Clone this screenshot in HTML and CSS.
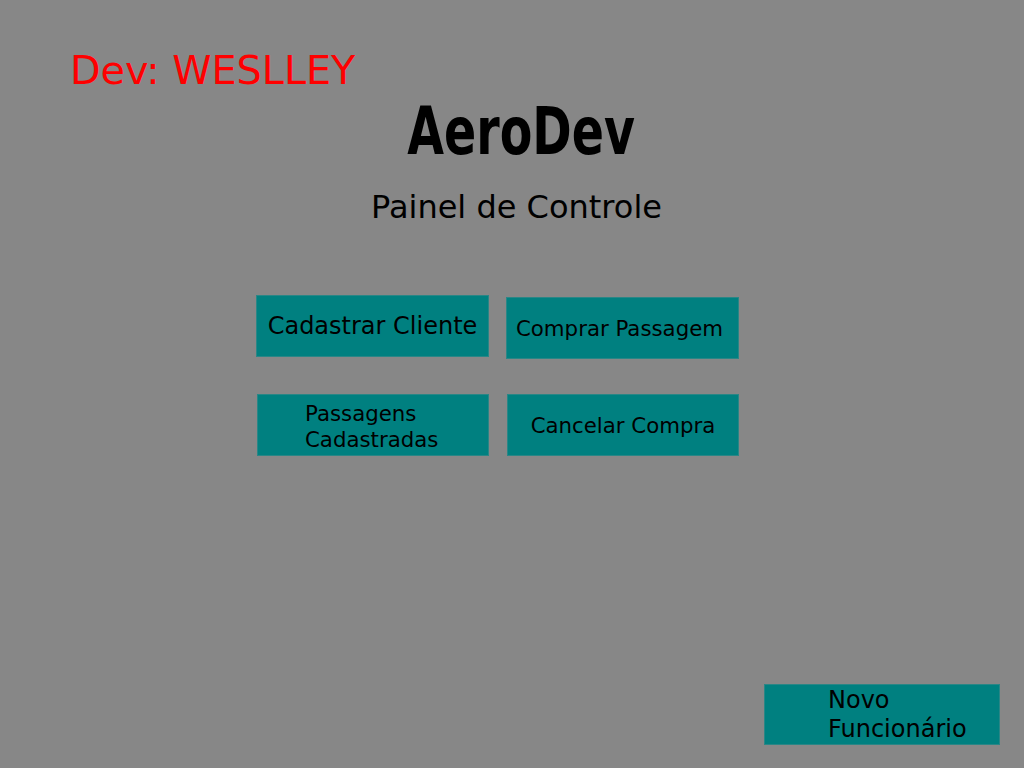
FILE: index.html
```html
<!DOCTYPE html>
<html lang="pt">
<head>
  <meta charset="UTF-8">
  <title>AeroDev</title>
  <link rel="stylesheet" href="styles.css">
</head>
<body>
  <div class="frame">
    <p class="dev">Dev: WESLLEY</p>
    <h1 class="brand"><span>AeroDev</span></h1>
    <p class="subtitle">Painel de Controle</p>

    <div class="menu">
      <button class="btn btn-big">Cadastrar Cliente</button>
      <button class="btn btn-shift">Comprar Passagem</button>
      <button class="btn btn-lines">Passagens<br>Cadastradas</button>
      <button class="btn btn-right">Cancelar Compra</button>
    </div>

    <div class="footer">
      <button class="btn btn-novo">Novo<br>Funcionário</button>
    </div>
  </div>
</body>
</html>
```

FILE: styles.css
```css
body {
  margin: 0;
  background: #878787;
  font-family: "DejaVu Sans", sans-serif;
}
.frame {
  height: 768px;
  display: flex;
  flex-direction: column;
  padding-top: 48px;
  box-sizing: border-box;
}
.dev {
  margin: 0 0 0 70px;
  font-size: 39.7px;
  line-height: 45px;
  color: #ff0000;
}
.brand {
  margin: 6px 0 0;
  padding-left: 19px;
  text-align: center;
  font-size: 66px;
  line-height: 66px;
  font-weight: bold;
  color: #000;
}
.brand span {
  display: inline-block;
  transform: scaleX(0.72);
}
.subtitle {
  margin: 24px 0 0;
  padding-left: 9px;
  text-align: center;
  font-size: 32px;
  line-height: 36px;
  color: #000;
}
.menu {
  margin: 70px 0 0 256px;
  display: grid;
  grid-template-columns: 233px 233px;
  column-gap: 17px;
  row-gap: 35px;
}
.btn {
  height: 62px;
  padding: 0;
  border: 1px solid #2a8686;
  background: #008080;
  color: #000;
  font-family: "DejaVu Sans", sans-serif;
  font-size: 21.3px;
  text-align: center;
  cursor: pointer;
}
.btn-big {
  font-size: 24px;
}
.btn-shift {
  margin-top: 2px;
  padding-right: 6px;
}
.btn-right {
  margin-left: 1px;
}
.btn-lines {
  margin-left: 1px;
  width: 232px;
  padding: 4px 0 0 47px;
  text-align: left;
  line-height: 26.5px;
}
.footer {
  margin-top: auto;
  padding: 0 24px 23px 0;
  display: flex;
  justify-content: flex-end;
}
.btn-novo {
  width: 236px;
  height: 61px;
  padding: 1px 0 0 63px;
  text-align: left;
  font-size: 24px;
  line-height: 29px;
}
```
